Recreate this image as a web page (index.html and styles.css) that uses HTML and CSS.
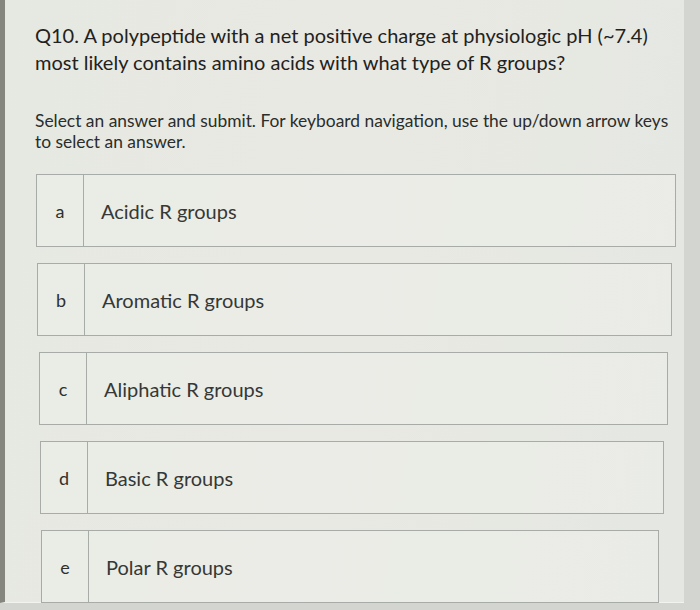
FILE: index.html
```html
<!DOCTYPE html>
<html>
<head>
<meta charset="utf-8">
<link rel="stylesheet" href="styles.css">
</head>
<body>
<div class="screen">
  <div class="content">
    <h1 class="question">Q10. A polypeptide with a net positive charge at physiologic pH (~7.4) most likely contains amino acids with what type of R groups?</h1>
    <p class="instructions">Select an answer and submit. For keyboard navigation, use the up/down arrow keys to select an answer.</p>
    <div class="options">
      <div class="option opt-a"><span class="letter">a</span><span class="label">Acidic R groups</span></div>
      <div class="option opt-b"><span class="letter">b</span><span class="label">Aromatic R groups</span></div>
      <div class="option opt-c"><span class="letter">c</span><span class="label">Aliphatic R groups</span></div>
      <div class="option opt-d"><span class="letter">d</span><span class="label">Basic R groups</span></div>
      <div class="option opt-e"><span class="letter">e</span><span class="label">Polar R groups</span></div>
    </div>
  </div>
</div>
</body>
</html>
```
FILE: styles.css
```css
html, body {
  margin: 0;
  padding: 0;
}
body {
  width: 700px;
  height: 610px;
  overflow: hidden;
  background: #d3d5d0;
  font-family: "Lato", "Open Sans", sans-serif;
}
.screen {
  width: 684px;
  height: 603px;
  border-left: 5px solid #85877f;
  border-bottom: 1px solid #f2f3f0;
  background: linear-gradient(100deg, #e6e8e2 0%, #e9e9e3 50%, #e4e7e2 100%);
  box-sizing: border-box;
}
.content {
  padding: 22px 0 0 30px;
}
.question {
  margin: 0;
  width: 640px;
  font-size: 20px;
  font-weight: 400;
  line-height: 27px;
  color: #1f2220;
}
.instructions {
  margin: 34px 0 0 0;
  width: 640px;
  font-size: 17.4px;
  line-height: 21px;
  color: #2a2d2b;
}
.options {
  margin-top: 22px;
  display: flex;
  flex-direction: column;
  gap: 16px;
}
.option {
  height: 73px;
  display: flex;
  align-items: center;
  border: 1.5px solid #a7aca8;
  box-sizing: border-box;
  background: rgba(236, 238, 233, 0.6);
}
.opt-a { margin-left: 1px; width: 640px; }
.opt-b { margin-left: 2px; width: 635px; }
.opt-c { margin-left: 4px; width: 629px; }
.opt-d { margin-left: 5px; width: 624px; }
.opt-e { margin-left: 6px; width: 618px; }
.letter {
  width: 46px;
  align-self: stretch;
  display: flex;
  align-items: center;
  justify-content: center;
  border-right: 1.5px solid #a7aca8;
  font-size: 18px;
  color: #2e312e;
}
.label {
  padding-left: 17px;
  font-size: 20px;
  color: #353836;
}
```
